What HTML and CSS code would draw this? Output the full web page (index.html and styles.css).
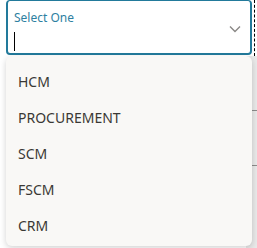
FILE: index.html
```html
<!DOCTYPE html>
<html lang="en">
<head>
    <meta charset="UTF-8">
    <title>Select One</title>
    <link rel="stylesheet" href="styles.css">
</head>
<body>
    <div class="page">
        <div class="field">
            <div class="field-box">
                <span class="field-label">Select One</span>
                <span class="caret"></span>
                <svg class="chevron" width="12" height="8" viewBox="0 0 12 8">
                    <path d="M1 1.5 L6 6.5 L11 1.5" fill="none" stroke="#8a8886" stroke-width="1.4"/>
                </svg>
            </div>
        </div>
        <div class="behind">
            <div class="behind-row"></div>
            <div class="behind-row"></div>
            <div class="behind-row last"></div>
        </div>

        <ul class="dropdown">
            <li>HCM</li>
            <li>PROCUREMENT</li>
            <li>SCM</li>
            <li>FSCM</li>
            <li>CRM</li>
        </ul>
    </div>
</body>
</html>
```

FILE: styles.css
```css
body {
    margin: 0;
    background: #fff;
    font-family: "Noto Sans", "Open Sans", sans-serif;
    overflow: hidden;
}
.page {
    position: relative;
    width: 257px;
    height: 248px;
    overflow: hidden;
}
.field {
    padding: 0 5px 0 6px;
}
.field-box {
    position: relative;
    height: 52px;
    border: 2px solid #227a9b;
    border-top-width: 1px;
    border-radius: 4px;
}
.field-box::after {
    content: "";
    position: absolute;
    top: -1px;
    right: -5px;
    height: 56px;
    border-right: 1px dashed #000;
}
.field-label {
    display: block;
    padding: 8px 0 0 6px;
    font-size: 12px;
    color: #2e7fa1;
}
.caret {
    display: block;
    width: 1px;
    height: 19px;
    margin: 6px 0 0 6px;
    background: #000;
}
.chevron {
    position: absolute;
    right: 9px;
    top: 24px;
}
.behind {
    margin-left: 246px;
    padding-top: 1px;
}
.behind-row {
    height: 54px;
    border-bottom: 1px solid #8c8c8c;
    background: #e9e9e9;
}
.behind-row.last {
    height: 90px;
    border-bottom: none;
}
.dropdown {
    position: absolute;
    top: 56px;
    left: 6px;
    box-sizing: border-box;
    width: 246px;
    height: 190px;
    margin: 0;
    padding: 8px 0 0;
    list-style: none;
    background: #f9f8f6;
    border-radius: 6px;
    box-shadow: 0 2px 6px rgba(0, 0, 0, 0.18);
}
.dropdown li {
    height: 36px;
    line-height: 36px;
    padding-left: 12px;
    font-size: 14px;
    color: #3a3835;
}
```
